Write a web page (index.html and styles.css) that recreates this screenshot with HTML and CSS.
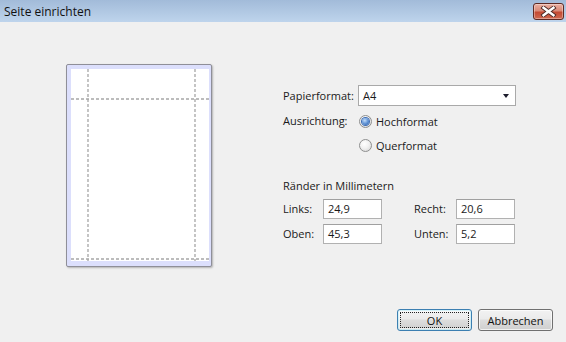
FILE: index.html
```html
<!DOCTYPE html>
<html lang="de">
<head>
<meta charset="utf-8">
<title>Seite einrichten</title>
<link rel="stylesheet" href="styles.css">
</head>
<body>
<div class="window">
  <div class="titlebar">
    <span class="title">Seite einrichten</span>
    <button class="close" aria-label="Schließen">
      <svg width="17" height="11" viewBox="0 0 17 11">
        <path d="M3.5 1.8 L13.5 9.2 M13.5 1.8 L3.5 9.2" stroke="#4a2a26" stroke-width="4.2" stroke-linecap="square" fill="none"/>
        <path d="M3.5 1.8 L13.5 9.2 M13.5 1.8 L3.5 9.2" stroke="#ffffff" stroke-width="2.4" stroke-linecap="square" fill="none"/>
      </svg>
    </button>
  </div>
  <div class="main">
    <div class="preview">
      <div class="sheet">
        <svg width="138" height="192" viewBox="0 0 138 192">
          <g stroke="#a6a6a6" stroke-width="1.3" stroke-dasharray="3 2" fill="none">
            <line x1="17" y1="0" x2="17" y2="192"/>
            <line x1="124" y1="0" x2="124" y2="192"/>
            <line x1="0" y1="30" x2="138" y2="30"/>
            <line x1="0" y1="190" x2="138" y2="190"/>
          </g>
        </svg>
      </div>
    </div>
    <div class="form">
      <div class="row-format">
        <span class="label lbl-format">Papierformat:</span>
        <div class="combo">
          <span class="combo-text">A4</span>
          <span class="combo-arrow"></span>
        </div>
      </div>
      <div class="row-orient">
        <span class="label lbl-format">Ausrichtung:</span>
        <div class="radios">
          <label class="radio-row"><span class="radio checked"></span><span>Hochformat</span></label>
          <label class="radio-row"><span class="radio"></span><span>Querformat</span></label>
        </div>
      </div>
      <div class="heading">Ränder in Millimetern</div>
      <div class="margins">
        <span class="label">Links:</span>
        <div class="input">24,9</div>
        <span class="label">Recht:</span>
        <div class="input">20,6</div>
        <span class="label">Oben:</span>
        <div class="input">45,3</div>
        <span class="label">Unten:</span>
        <div class="input">5,2</div>
      </div>
    </div>
  </div>
  <div class="buttons">
    <button class="btn default"><span class="focus">OK</span></button>
    <button class="btn">Abbrechen</button>
  </div>
</div>
</body>
</html>
```
FILE: styles.css
```css
* { box-sizing: border-box; }
html, body {
  margin: 0;
  padding: 0;
  width: 566px;
  height: 342px;
  overflow: hidden;
}
body {
  font-family: "Open Sans", "Noto Sans", sans-serif;
  font-size: 11px;
  color: #1a1a1a;
  background: #f0f0f0;
}
.window {
  display: flex;
  flex-direction: column;
  width: 566px;
  height: 342px;
}
.titlebar {
  height: 22px;
  flex: none;
  display: flex;
  align-items: center;
  justify-content: space-between;
  padding: 0 2px 0 4px;
  background: linear-gradient(#a2bbd9, #bed4ec);
}
.title {
  font-size: 12px;
  color: #111;
  line-height: 16px;
  margin-top: 1px;
}
.close {
  width: 31px;
  height: 17px;
  padding: 0;
  margin: 0;
  display: flex;
  align-items: center;
  justify-content: center;
  border: 1px solid #5e2a24;
  border-radius: 3px;
  background: linear-gradient(#ebb0a2 0%, #d98a78 45%, #c44a33 55%, #cf6a52 100%);
  box-shadow: inset 0 0 0 1px rgba(255,255,255,0.35);
  margin-top: 1px;
}
.main {
  display: flex;
  padding-top: 42px;
  padding-left: 66px;
}
.preview {
  width: 146px;
  height: 203px;
  border: 1px solid #8f8f98;
  border-radius: 2px;
  background: #dcdffc;
  padding: 4px 2px 5px 4px;
  box-shadow: 1px 1px 2px rgba(0,0,0,0.25);
}
.sheet {
  width: 138px;
  height: 192px;
  background: #fff;
}
.sheet svg { display: block; }
.form {
  margin-left: 71px;
  margin-top: 21px;
  display: flex;
  flex-direction: column;
}
.label { line-height: 16px; }
.row-format {
  display: flex;
  align-items: center;
  height: 21px;
}
.lbl-format { width: 75px; flex: none; }
.combo {
  width: 158px;
  height: 21px;
  border: 1px solid #a9a9a9;
  background: #fff;
  display: flex;
  align-items: center;
  justify-content: space-between;
  padding: 0 6px 0 4px;
}
.combo-text { line-height: 16px; }
.combo-arrow {
  width: 0;
  height: 0;
  border-left: 3.5px solid transparent;
  border-right: 3.5px solid transparent;
  border-top: 4px solid #1c1c2c;
}
.row-orient {
  display: flex;
  margin-top: 3px;
}
.row-orient .label { height: 24px; display: flex; align-items: center; }
.radios { display: flex; flex-direction: column; }
.radio-row {
  height: 24px;
  display: flex;
  align-items: center;
  gap: 4px;
  margin-left: 1px;
}
.radio {
  width: 13px;
  height: 13px;
  border-radius: 50%;
  border: 1px solid #8e8f8f;
  background: radial-gradient(circle at 40% 35%, #ffffff 0%, #f1f1f1 45%, #d2d2d2 100%);
  display: flex;
  align-items: center;
  justify-content: center;
}
.radio.checked::after {
  content: "";
  width: 7px;
  height: 7px;
  border-radius: 50%;
  background: radial-gradient(circle at 40% 35%, #c2ddfb 0%, #5b8fd3 55%, #1f53a6 100%);
  box-shadow: 0 0 0 1px #3d6db4;
}
.heading {
  margin-top: 21px;
  line-height: 16px;
}
.margins {
  margin-top: 5px;
  display: grid;
  grid-template-columns: 40px 59px 74px 59px;
  grid-auto-rows: 20px;
  row-gap: 5px;
  column-gap: 0;
  align-items: center;
}
.margins .label:nth-child(3),
.margins .label:nth-child(7) { padding-left: 32px; }
.input {
  height: 20px;
  border: 1px solid #b1b1b1;
  border-top-color: #a0a0a0;
  background: #fff;
  padding: 0 4px;
  line-height: 18px;
}
.buttons {
  margin-top: auto;
  display: flex;
  justify-content: flex-end;
  gap: 6px;
  padding: 0 13px 11px 0;
}
.btn {
  width: 75px;
  height: 22px;
  font-family: inherit;
  font-size: 11px;
  color: #111;
  border: 1px solid #707070;
  border-radius: 3px;
  background: linear-gradient(#f2f2f2 0%, #ebebeb 45%, #dddddd 50%, #cfcfcf 100%);
  box-shadow: inset 0 0 0 1px rgba(255,255,255,0.7);
  padding: 0;
  display: flex;
  align-items: center;
  justify-content: center;
}
.btn.default {
  border-color: #3c7fb1;
  box-shadow: inset 0 0 0 1px #48d8fb33, inset 0 0 0 2px rgba(255,255,255,0.6);
}
.focus {
  flex: 1;
  align-self: stretch;
  margin: 2px;
  border: 1px dotted #222;
  display: flex;
  align-items: center;
  justify-content: center;
}
```
